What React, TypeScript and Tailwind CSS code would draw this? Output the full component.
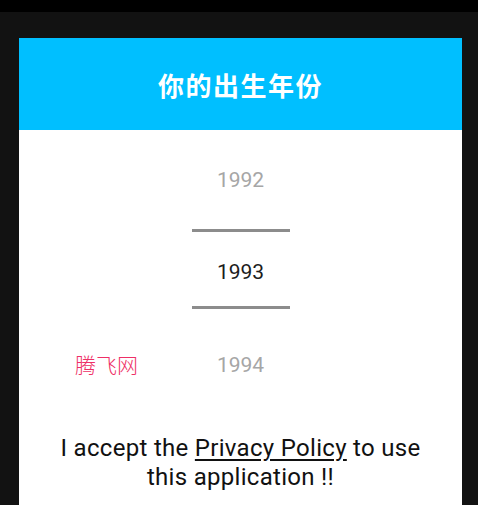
const years = [
  { value: "1992", active: false },
  { value: "1993", active: true },
  { value: "1994", active: false },
];

export default function App() {
  return (
    <div className="h-[505px] w-full overflow-hidden bg-[#121212] font-['Roboto','Noto_Sans_CJK_SC',sans-serif]">
      <div className="h-[12px] bg-black" />
      <div className="px-[19px] pt-[26px] pr-[16px]">
        <div className="bg-white">
          <div className="flex h-[92px] items-center justify-center bg-[#00bfff]">
            <h1 className="font-['Noto_Sans_CJK_SC',sans-serif] text-[26px] font-bold tracking-[1.5px] text-white">
              你的出生年份
            </h1>
          </div>

          <div className="relative">
            <div className="mx-auto w-[98px] text-[21px]">
              <div className="flex h-[99px] items-center justify-center pt-[2px] text-[#a6a6a6]">
                {years[0].value}
              </div>
              <div className="h-[3px] bg-[#8c8c8c]" />
              <div className="flex h-[74px] items-center justify-center pt-[8px] text-[#1c1c1c]">
                {years[1].value}
              </div>
              <div className="h-[3px] bg-[#8c8c8c]" />
              <div className="flex h-[110px] items-center justify-center pt-[4px] text-[#a6a6a6]">
                {years[2].value}
              </div>
            </div>
            <span className="absolute left-[56px] top-[224px] font-['Noto_Sans_CJK_SC',sans-serif] text-[21px] leading-none font-light text-[#ee2f66]">
              腾飞网
            </span>
          </div>

          <p className="px-6 pt-[15px] pb-6 text-center text-[24px] leading-[29px] tracking-[0.3px] text-[#111]">
            I accept the <span className="underline underline-offset-[3px]">Privacy Policy</span> to use
            this application !!
          </p>
        </div>
      </div>
    </div>
  );
}
